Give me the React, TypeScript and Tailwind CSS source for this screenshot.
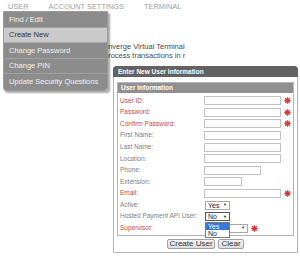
import type { ReactNode } from 'react';

const MENU_ITEMS = ['Find / Edit', 'Create New', 'Change Password', 'Change PIN', 'Update Security Questions'];

function Star() {
  return (
    <svg viewBox="0 0 10 10" className="w-[7px] h-[7px] shrink-0 ml-[3px]" stroke="#d23a3a" strokeWidth={1.8}>
      <path d="M5 0.5v9M0.5 5h9M1.8 1.8l6.4 6.4M8.2 1.8l-6.4 6.4" />
    </svg>
  );
}

function Row({ label, required, children }: { label: string; required?: boolean; children: ReactNode }) {
  return (
    <div className="flex items-center h-[11.6px]">
      <span
        className={
          required
            ? 'w-[84px] shrink-0 text-[6.5px] leading-none text-[#c44848]'
            : 'w-[84px] shrink-0 text-[6.5px] leading-none text-[#808080]'
        }
      >
        {label}
      </span>
      {children}
    </div>
  );
}

function Field({ width, required }: { width: string; required?: boolean }) {
  return (
    <div className="flex items-center">
      <input className={`${width} h-[9px] border border-[#c2c2c2] bg-white`} />
      {required && <Star />}
    </div>
  );
}

function FakeSelect({ value, width, focused }: { value: string; width: string; focused?: boolean }) {
  return (
    <div
      className={`${width} h-[9px] ml-[1px] flex items-center justify-between pl-[2px] pr-[2px] bg-white border ${
        focused ? 'border-[#555]' : 'border-[#a9a9a9]'
      }`}
    >
      <span className="text-[7px] leading-none text-[#222]">{value}</span>
      <span className="text-[4px] leading-none text-[#222]">▼</span>
    </div>
  );
}

export default function App() {
  return (
    <div className="relative w-[300px] h-[258px] overflow-hidden bg-white font-['Liberation_Sans',Arial,sans-serif]">
      {/* top nav */}
      <div className="flex gap-[20px] pl-[8px] pt-[2px] h-[11px] text-[7.4px] leading-[9px] text-[#a0a0a0]">
        <span>USER</span>
        <span>ACCOUNT SETTINGS</span>
        <span>TERMINAL</span>
      </div>

      {/* intro text behind the menu */}
      <div className="ml-[104px] mt-[32px] text-[7.5px] leading-[8.5px] text-[#4a4a4a]">
        <p>onverge Virtual Terminal</p>
        <p>process transactions in r</p>
      </div>

      {/* panel */}
      <div className="ml-[113px] mt-[6px] w-[185px] border border-[#b8b8b8] rounded-t-[4px] bg-white">
        <div className="h-[11px] -mx-[1px] -mt-[1px] rounded-t-[4px] bg-[#626262] pl-[5px] flex items-center text-[6.5px] font-bold text-white">
          Enter New User Information
        </div>
        <div className="mx-[3px] mt-[5px] border border-[#b5b5b5]">
          <div className="h-[10px] bg-[#909090] pl-[3px] flex items-center text-[6.5px] font-bold text-white">
            User Information
          </div>
          <div className="pl-[2px] pt-[2px] pb-[1px]">
            <Row label="User ID:" required><Field width="w-[77px]" required /></Row>
            <Row label="Password:" required><Field width="w-[77px]" required /></Row>
            <Row label="Confirm Password:" required><Field width="w-[77px]" required /></Row>
            <Row label="First Name:"><Field width="w-[77px]" /></Row>
            <Row label="Last Name:"><Field width="w-[77px]" /></Row>
            <Row label="Location:"><Field width="w-[77px]" /></Row>
            <Row label="Phone:"><Field width="w-[57px]" /></Row>
            <Row label="Extension:"><Field width="w-[38px]" /></Row>
            <Row label="Email:" required><Field width="w-[77px]" required /></Row>
            <Row label="Active:"><FakeSelect value="Yes" width="w-[25px]" /></Row>
            <Row label="Hosted Payment API User:">
              <div className="relative z-10">
                <FakeSelect value="No" width="w-[25px]" focused />
                <div className="absolute left-[1px] top-[9.5px] w-[25px] bg-white border border-[#7a7a7a]">
                  <div className="h-[7px] bg-[#3a76d6] pl-[2px] flex items-center text-[7px] leading-none text-white">Yes</div>
                  <div className="h-[7px] pl-[2px] flex items-center text-[7px] leading-none text-[#222]">No</div>
                </div>
              </div>
            </Row>
            <Row label="Supervisor:" required>
              <div className="flex items-center">
                <FakeSelect value="" width="w-[43px]" />
                <Star />
              </div>
            </Row>
          </div>
        </div>
        <div className="flex justify-center gap-[3px] mt-[3px] pb-[3px]">
          <button className="h-[10px] w-[48px] flex items-center justify-center rounded-[2px] border border-[#a0a0a0] bg-gradient-to-b from-[#f4f4f4] to-[#dcdcdc] text-[8px] leading-none text-[#333]">
            Create User
          </button>
          <button className="h-[10px] w-[26px] flex items-center justify-center rounded-[2px] border border-[#a0a0a0] bg-gradient-to-b from-[#f4f4f4] to-[#dcdcdc] text-[8px] leading-none text-[#333]">
            Clear
          </button>
        </div>
      </div>

      {/* user dropdown menu */}
      <div className="absolute left-[3px] top-[11px] w-[105px] rounded-b-[3px] overflow-hidden border border-[#9a9a9a] shadow-[2px_2px_2px_rgba(0,0,0,0.35)]">
        {MENU_ITEMS.map((item) => (
          <div
            key={item}
            className={
              item === 'Create New'
                ? 'h-[15.6px] flex items-center pl-[5px] text-[7.5px] leading-none bg-[#cacaca] text-[#333] border-b border-[#a8a8a8]'
                : 'h-[15.6px] flex items-center pl-[5px] text-[7.5px] leading-none bg-[#8c8c8c] text-[#f2f2f2] border-b border-[#a0a0a0] last:border-b-0'
            }
          >
            {item}
          </div>
        ))}
      </div>
    </div>
  );
}
